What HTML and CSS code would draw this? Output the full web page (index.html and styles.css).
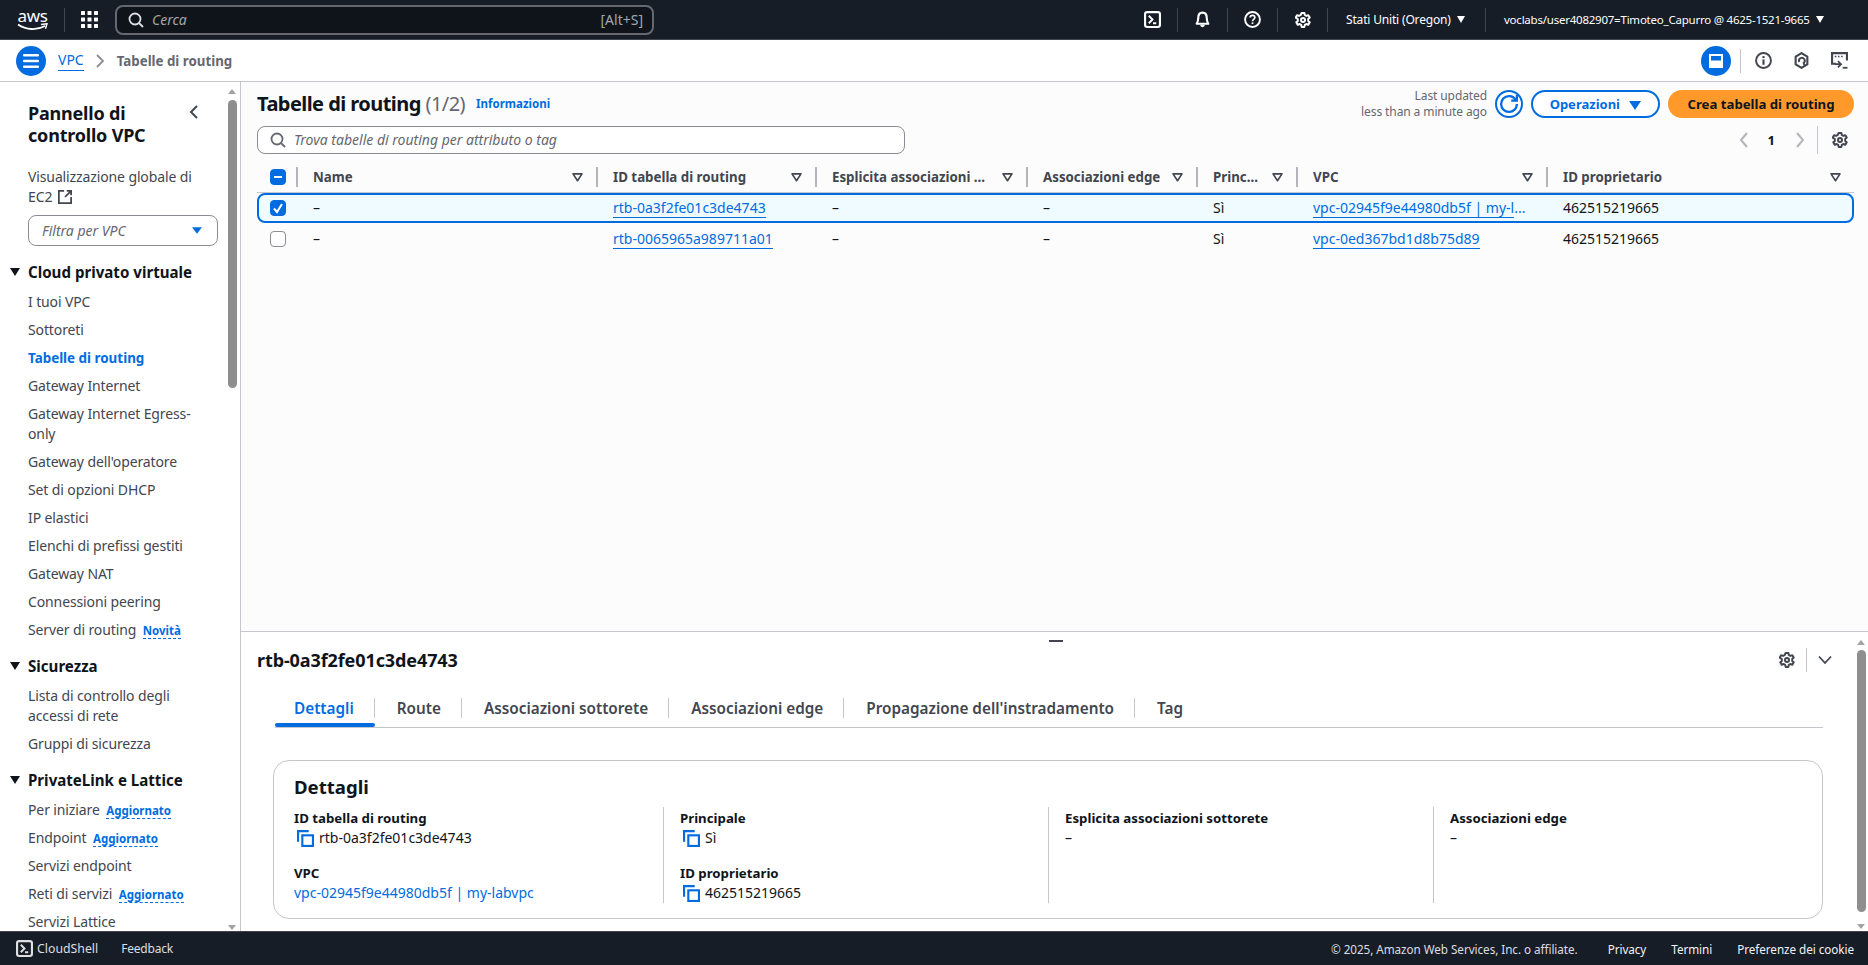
FILE: index.html
```html
<!DOCTYPE html>
<html lang="it">
<head>
    <meta charset="UTF-8">
    <meta name="viewport" content="width=device-width, initial-scale=1.0">
    <title>Tabelle di routing | VPC</title>
    <link rel="stylesheet" href="styles.css">
</head>
<body>
    <svg class="sprite" width="0" height="0">
        <symbol id="gear" viewBox="0 0 16 16"><path d="M6.600 1h2.800l.4 2 1.500.9 2-.7 1.400 2.400-1.500 1.400v1.900l1.500 1.300-1.400 2.500-2-.7-1.500.9-.4 2H6.600l-.4-2-1.500-.9-2 .7-1.400-2.500 1.500-1.300V7L.7 5.600l1.400-2.400 2 .7L5.700 3z" fill="none" stroke="currentColor" stroke-width="2" stroke-linejoin="round"/><circle cx="8" cy="8" r="2" fill="none" stroke="currentColor" stroke-width="2"/></symbol>
        <symbol id="search" viewBox="0 0 16 16"><circle cx="7" cy="7" r="5.500" fill="none" stroke="currentColor" stroke-width="1.800"/><path d="M11 11l4 4" fill="none" stroke="currentColor" stroke-width="1.800"/></symbol>
        <symbol id="shell" viewBox="0 0 16 16"><rect x="1" y="1" width="14" height="14" rx="2" fill="none" stroke="currentColor" stroke-width="2"/><path d="M4.500 4.500L8 8l-3.500 3.500M8.500 11.500h3" fill="none" stroke="currentColor" stroke-width="1.800"/></symbol>
        <symbol id="filter" viewBox="0 0 16 16"><path d="M2.500 3.500h11L8 12z" fill="none" stroke="currentColor" stroke-width="2" stroke-linejoin="round"/></symbol>
        <symbol id="copy" viewBox="0 0 16 16"><path d="M1 11V1h10" fill="none" stroke="currentColor" stroke-width="2"/><rect x="5" y="5" width="10" height="10" fill="none" stroke="currentColor" stroke-width="2"/></symbol>
    </svg>

    <header class="topbar">
        <div class="aws-logo">
            <span>aws</span>
            <svg width="31" height="8" viewBox="0 0 31 8"><path d="M1 1.500c8 5.500 19 6 27 1.500" fill="none" stroke="#fff" stroke-width="1.800"/><path d="M24 1.500l6-.8-1.500 5" fill="none" stroke="#fff" stroke-width="1.400"/></svg>
        </div>
        <div class="grid-btn">
            <svg width="17" height="17" viewBox="0 0 17 17" fill="#fff"><rect width="4" height="4" rx=".5"/><rect x="6.500" width="4" height="4" rx=".5"/><rect x="13" width="4" height="4" rx=".5"/><rect y="6.500" width="4" height="4" rx=".5"/><rect x="6.500" y="6.500" width="4" height="4" rx=".5"/><rect x="13" y="6.500" width="4" height="4" rx=".5"/><rect y="13" width="4" height="4" rx=".5"/><rect x="6.500" y="13" width="4" height="4" rx=".5"/><rect x="13" y="13" width="4" height="4" rx=".5"/></svg>
        </div>
        <div class="top-search">
            <svg class="top-search-icon" width="16" height="16"><use href="#search"/></svg>
            <span class="top-search-text">Cerca</span>
            <span class="top-search-key">[Alt+S]</span>
        </div>
        <div class="top-right">
            <div class="top-cell"><svg width="17" height="17"><use href="#shell"/></svg></div>
            <div class="top-cell">
                <svg width="17" height="17" viewBox="0 0 16 16"><path d="M2.500 12c1-1.500 1.500-3 1.500-5.500 0-3 1.500-5 4-5s4 2 4 5c0 2.500.5 4 1.500 5.500z" fill="none" stroke="currentColor" stroke-width="2" stroke-linejoin="round"/><path d="M5.800 13h4.400a2.200 2.200 0 0 1-4.400 0z" fill="currentColor"/></svg>
            </div>
            <div class="top-cell">
                <svg width="17" height="17" viewBox="0 0 16 16"><circle cx="8" cy="8" r="7" fill="none" stroke="currentColor" stroke-width="1.800"/><path d="M5.800 6.200C5.800 5 6.800 4.200 8 4.200s2.200.8 2.200 2c0 1.700-2.200 1.700-2.200 3.400" fill="none" stroke="currentColor" stroke-width="1.600"/><rect x="7.200" y="10.700" width="1.600" height="1.600" fill="currentColor"/></svg>
            </div>
            <div class="top-cell"><svg width="16" height="16"><use href="#gear"/></svg></div>
            <div class="top-menu top-region"><span>Stati Uniti (Oregon)</span> <i class="caret"></i></div>
            <div class="top-menu top-account"><span>voclabs/user4082907=Timoteo_Capurro @ 4625-1521-9665</span> <i class="caret"></i></div>
        </div>
    </header>

    <div class="crumbbar">
        <div class="round-btn">
            <svg width="16" height="14" viewBox="0 0 16 14" fill="#fff"><rect width="16" height="2.400" rx="1"/><rect y="5.800" width="16" height="2.400" rx="1"/><rect y="11.600" width="16" height="2.400" rx="1"/></svg>
        </div>
        <a class="crumb-link">VPC</a>
        <svg class="crumb-sep" width="10" height="14" viewBox="0 0 10 14"><path d="M2 1l6 6-6 6" fill="none" stroke="#8c8c94" stroke-width="1.800"/></svg>
        <span class="crumb-current">Tabelle di routing</span>
        <div class="crumb-tools">
            <div class="round-btn">
                <svg width="16" height="16" viewBox="0 0 16 16"><rect x="2" y="2" width="12" height="12" fill="none" stroke="#fff" stroke-width="2"/><rect x="2" y="7.500" width="12" height="6.500" fill="#fff"/></svg>
            </div>
            <div class="crumb-tools-sep"></div>
            <svg class="tool-icon" width="17" height="17" viewBox="0 0 16 16"><circle cx="8" cy="8" r="7" fill="none" stroke="currentColor" stroke-width="1.800"/><path d="M8 7v5" stroke="currentColor" stroke-width="2"/><rect x="7" y="3.800" width="2" height="2" fill="currentColor"/></svg>
            <svg class="tool-icon" width="17" height="17" viewBox="0 0 16 16"><path d="M8 1l5.500 3.300v7.400L8 15l-5.500-3.300V4.300z" fill="none" stroke="currentColor" stroke-width="2" stroke-linejoin="round"/><path d="M6 9.500a2.700 2.700 0 1 1 4 .8l1 2.700" fill="none" stroke="currentColor" stroke-width="1.800"/></svg>
            <svg class="tool-icon" width="17" height="17" viewBox="0 0 16 16"><path d="M4.500 11H1V1h14v7" fill="none" stroke="currentColor" stroke-width="2"/><path d="M3.500 3.500h1.500v1.500H3.500zM6.500 3.500H8v1.500H6.500zM9.500 3.500H11v1.500H9.500z" fill="currentColor"/><path d="M3.500 11.500h5M6.500 8.500l3 3-3 3" fill="none" stroke="currentColor" stroke-width="1.600"/><rect x="11" y="14" width="4.500" height="1.700" fill="currentColor"/></svg>
        </div>
    </div>

    <div class="app">
        <nav class="sidebar">
            <div class="side-head">
                <h2>Pannello di controllo VPC</h2>
                <svg class="side-close" width="10" height="14" viewBox="0 0 10 14"><path d="M8 1L2 7l6 6" fill="none" stroke="#424650" stroke-width="2"/></svg>
            </div>
            <a class="side-ext">Visualizzazione globale di EC2 <svg width="14" height="14" viewBox="0 0 16 16"><path d="M15 8v7H1V1h6M10 1h5v5M15 1L8 8" fill="none" stroke="#424650" stroke-width="2"/></svg></a>
            <div class="side-select"><span>Filtra per VPC</span><svg width="10" height="7" viewBox="0 0 12 8"><path d="M0 0h12L6 8z" fill="#006ce0"/></svg></div>

            <h3 class="side-section"><i class="caret dark"></i>Cloud privato virtuale</h3>
            <ul class="side-list">
                <li>I tuoi VPC</li>
                <li>Sottoreti</li>
                <li class="active">Tabelle di routing</li>
                <li>Gateway Internet</li>
                <li>Gateway Internet Egress-only</li>
                <li>Gateway dell'operatore</li>
                <li>Set di opzioni DHCP</li>
                <li>IP elastici</li>
                <li>Elenchi di prefissi gestiti</li>
                <li>Gateway NAT</li>
                <li>Connessioni peering</li>
                <li>Server di routing <span class="badge">Novità</span></li>
            </ul>

            <h3 class="side-section"><i class="caret dark"></i>Sicurezza</h3>
            <ul class="side-list">
                <li>Lista di controllo degli accessi di rete</li>
                <li>Gruppi di sicurezza</li>
            </ul>

            <h3 class="side-section"><i class="caret dark"></i>PrivateLink e Lattice</h3>
            <ul class="side-list">
                <li>Per iniziare <span class="badge">Aggiornato</span></li>
                <li>Endpoint <span class="badge">Aggiornato</span></li>
                <li>Servizi endpoint</li>
                <li>Reti di servizi <span class="badge">Aggiornato</span></li>
                <li>Servizi Lattice</li>
            </ul>
            <div class="scrollbar side-scroll"><i class="arrow up"></i><b></b><i class="arrow down"></i></div>
        </nav>

        <main class="content">
            <section class="table-area">
                <div class="table-title">
                    <h1>Tabelle di routing <span>(1/2)</span></h1>
                    <a class="info-link">Informazioni</a>
                    <div class="table-actions">
                        <div class="updated">Last updated<br>less than a minute ago</div>
                        <button class="btn-refresh"><svg width="18" height="18" viewBox="0 0 16 16"><path d="M10 5h5V0M15 8a6.930 6.930 0 0 1-7 7 6.930 6.930 0 0 1-7-7 6.930 6.930 0 0 1 7-7 6.490 6.490 0 0 1 6 3.700" fill="none" stroke="#006ce0" stroke-width="2"/></svg></button>
                        <button class="btn-outline">Operazioni <i class="caret blue"></i></button>
                        <button class="btn-primary">Crea tabella di routing</button>
                    </div>
                </div>
                <div class="filter-row">
                    <div class="table-search">
                        <svg width="16" height="16"><use href="#search"/></svg>
                        <span>Trova tabelle di routing per attributo o tag</span>
                    </div>
                    <div class="pager">
                        <svg width="10" height="16" viewBox="0 0 10 16"><path d="M8 1L2 8l6 7" fill="none" stroke="#b4b4bb" stroke-width="2"/></svg>
                        <b>1</b>
                        <svg width="10" height="16" viewBox="0 0 10 16"><path d="M2 1l6 7-6 7" fill="none" stroke="#b4b4bb" stroke-width="2"/></svg>
                        <div class="pager-sep"></div>
                        <svg class="pager-gear" width="16" height="16"><use href="#gear"/></svg>
                    </div>
                </div>

                <div class="grid-row grid-head">
                    <div class="cell-check"><span class="check on"><i class="dash"></i></span></div>
                    <div class="col-head"><span>Name</span><svg width="13" height="13"><use href="#filter"/></svg></div>
                    <div class="col-head"><span>ID tabella di routing</span><svg width="13" height="13"><use href="#filter"/></svg></div>
                    <div class="col-head"><span>Esplicita associazioni ...</span><svg width="13" height="13"><use href="#filter"/></svg></div>
                    <div class="col-head"><span>Associazioni edge</span><svg width="13" height="13"><use href="#filter"/></svg></div>
                    <div class="col-head"><span>Princ...</span><svg width="13" height="13"><use href="#filter"/></svg></div>
                    <div class="col-head"><span>VPC</span><svg width="13" height="13"><use href="#filter"/></svg></div>
                    <div class="col-head last"><span>ID proprietario</span><svg width="13" height="13"><use href="#filter"/></svg></div>
                </div>
                <div class="grid-row row selected">
                    <div class="cell-check"><span class="check on"><svg width="12" height="12" viewBox="0 0 12 12"><path d="M2 6.500L5 10l5-8" fill="none" stroke="#fff" stroke-width="2"/></svg></span></div>
                    <div class="cell">–</div>
                    <div class="cell"><a class="link">rtb-0a3f2fe01c3de4743</a></div>
                    <div class="cell">–</div>
                    <div class="cell">–</div>
                    <div class="cell">Sì</div>
                    <div class="cell plain-link"><a class="link">vpc-02945f9e44980db5f | my-l</a>...</div>
                    <div class="cell">462515219665</div>
                </div>
                <div class="grid-row row">
                    <div class="cell-check"><span class="check"></span></div>
                    <div class="cell">–</div>
                    <div class="cell"><a class="link">rtb-0065965a989711a01</a></div>
                    <div class="cell">–</div>
                    <div class="cell">–</div>
                    <div class="cell">Sì</div>
                    <div class="cell"><a class="link">vpc-0ed367bd1d8b75d89</a></div>
                    <div class="cell">462515219665</div>
                </div>
            </section>

            <section class="split">
                <i class="split-handle"></i>
                <div class="split-head">
                    <h2>rtb-0a3f2fe01c3de4743</h2>
                    <div class="split-tools">
                        <svg class="tool-icon" width="16" height="16"><use href="#gear"/></svg>
                        <div class="split-sep"></div>
                        <svg width="14" height="10" viewBox="0 0 14 10"><path d="M1 1.500l6 6.500 6-6.500" fill="none" stroke="#424650" stroke-width="1.800"/></svg>
                    </div>
                </div>
                <div class="tabs">
                    <div class="tab active"><span>Dettagli</span></div>
                    <div class="tab"><span>Route</span></div>
                    <div class="tab"><span>Associazioni sottorete</span></div>
                    <div class="tab"><span>Associazioni edge</span></div>
                    <div class="tab"><span>Propagazione dell'instradamento</span></div>
                    <div class="tab"><span>Tag</span></div>
                </div>
                <div class="card">
                    <h3>Dettagli</h3>
                    <div class="card-grid">
                        <div class="card-col">
                            <dl>
                                <dt>ID tabella di routing</dt>
                                <dd><svg class="copy" width="17" height="17"><use href="#copy"/></svg>rtb-0a3f2fe01c3de4743</dd>
                            </dl>
                            <dl>
                                <dt>VPC</dt>
                                <dd><a class="plain-link">vpc-02945f9e44980db5f | my-labvpc</a></dd>
                            </dl>
                        </div>
                        <div class="card-col">
                            <dl>
                                <dt>Principale</dt>
                                <dd><svg class="copy" width="17" height="17"><use href="#copy"/></svg>Sì</dd>
                            </dl>
                            <dl>
                                <dt>ID proprietario</dt>
                                <dd><svg class="copy" width="17" height="17"><use href="#copy"/></svg>462515219665</dd>
                            </dl>
                        </div>
                        <div class="card-col">
                            <dl>
                                <dt>Esplicita associazioni sottorete</dt>
                                <dd>–</dd>
                            </dl>
                        </div>
                        <div class="card-col">
                            <dl>
                                <dt>Associazioni edge</dt>
                                <dd>–</dd>
                            </dl>
                        </div>
                    </div>
                </div>
                <div class="scrollbar split-scroll"><i class="arrow up"></i><b></b><i class="arrow down"></i></div>
            </section>
        </main>
    </div>

    <footer class="footer">
        <svg width="17" height="17"><use href="#shell"/></svg>
        <span class="foot-shell">CloudShell</span>
        <span class="foot-feedback">Feedback</span>
        <div class="foot-right">
            <span class="foot-copy">© 2025, Amazon Web Services, Inc. o affiliate.</span>
            <span class="foot-strong">Privacy</span>
            <span class="foot-strong">Termini</span>
            <span class="foot-strong">Preferenze dei cookie</span>
        </div>
    </footer>
</body>
</html>
```

FILE: styles.css
```css
* {
    box-sizing: border-box;
}
html, body {
    margin: 0;
    height: 100%;
}
body {
    display: flex;
    flex-direction: column;
    height: 965px;
    overflow: hidden;
    font-family: "Noto Sans", sans-serif;
    font-size: 14px;
    line-height: 20px;
    color: #0f141a;
    background: #fff;
}
h1, h2, h3, ul, dl, dd {
    margin: 0;
    padding: 0;
}
ul {
    list-style: none;
}
.sprite {
    position: absolute;
}
.caret {
    display: inline-block;
    width: 0;
    height: 0;
    border-left: 4.500px solid transparent;
    border-right: 4.500px solid transparent;
    border-top: 7px solid currentColor;
}

/* top bar */
.topbar {
    display: flex;
    align-items: center;
    flex: none;
    height: 40px;
    padding-left: 17px;
    color: #fff;
    background: #161d26;
    border-bottom: 1px solid #424650;
}
.aws-logo {
    display: flex;
    flex-direction: column;
    align-items: center;
    width: 48px;
    padding-right: 16px;
    height: 24px;
    border-right: 1px solid #424650;
    font-size: 17px;
    line-height: 15px;
    letter-spacing: -.3px;
}
.aws-logo svg {
    display: block;
    flex: none;
}
.grid-btn {
    display: flex;
    margin-left: 16px;
}
.top-search {
    display: flex;
    align-items: center;
    width: 539px;
    height: 30px;
    margin-left: 17px;
    padding: 0 9px 0 11px;
    background: #0f141a;
    border: 2px solid #656871;
    border-radius: 8px;
    font-size: 14px;
    color: #a4a4ad;
}
.top-search-icon {
    color: #dedee3;
}
.top-search-text {
    margin-left: 8px;
    font-style: italic;
}
.top-search-key {
    margin-left: auto;
}
.top-right {
    display: flex;
    align-items: center;
    margin-left: auto;
    font-size: 12px;
}
.top-cell {
    display: flex;
    align-items: center;
    justify-content: center;
    width: 50px;
    height: 24px;
    border-right: 1px solid #424650;
}
.top-menu {
    display: flex;
    align-items: center;
    height: 24px;
    padding-left: 18px;
    white-space: nowrap;
}
.top-menu .caret {
    margin-left: 6px;
}
.top-region {
    width: 158px;
    border-right: 1px solid #424650;
    letter-spacing: -.17px;
}
.top-account {
    width: 382px;
    font-size: 11.500px;
    letter-spacing: -.23px;
}

/* breadcrumbs */
.crumbbar {
    display: flex;
    align-items: center;
    flex: none;
    height: 42px;
    padding: 0 20px 0 16px;
    border-bottom: 1px solid #c6c6cd;
}
.round-btn {
    display: flex;
    align-items: center;
    justify-content: center;
    width: 30px;
    height: 30px;
    border-radius: 50%;
    background: #006ce0;
}
.crumb-link {
    margin-left: 12px;
    color: #006ce0;
    border-bottom: 1px solid #006ce0;
    font-size: 14px;
}
.crumb-sep {
    margin-left: 11px;
}
.crumb-current {
    margin-left: 12px;
    color: #656871;
    font-weight: 700;
    font-size: 13.300px;
}
.crumb-tools {
    display: flex;
    align-items: center;
    margin-left: auto;
}
.crumb-tools-sep {
    width: 1px;
    height: 24px;
    margin: 0 14px 0 9px;
    background: #c6c6cd;
}
.tool-icon {
    color: #424650;
}
.crumb-tools .tool-icon + .tool-icon {
    margin-left: 21px;
}

/* sidebar */
.app {
    display: flex;
    flex: 1;
    min-height: 0;
}
.sidebar {
    position: relative;
    flex: none;
    width: 241px;
    padding: 20px 0 0 28px;
    overflow: hidden;
    border-right: 1px solid #c6c6cd;
    color: #424650;
    letter-spacing: -.12px;
}
.side-head {
    display: flex;
    justify-content: space-between;
    width: 171px;
}
.side-head h2 {
    width: 140px;
    font-size: 18px;
    line-height: 22px;
    font-weight: 700;
    color: #0f141a;
    letter-spacing: -.2px;
}
.side-close {
    margin-top: 3px;
}
.side-ext {
    display: block;
    width: 175px;
    margin-top: 21px;
}
.side-ext svg {
    vertical-align: -2px;
    margin-left: 2px;
}
.side-select {
    display: flex;
    align-items: center;
    justify-content: space-between;
    width: 190px;
    height: 31px;
    margin-top: 8px;
    padding: 0 15px 0 13px;
    border: 1px solid #8c8c94;
    border-radius: 8px;
    font-style: italic;
    color: #656871;
    letter-spacing: 0;
}
.side-section {
    position: relative;
    margin-top: 15px;
    font-size: 15.100px;
    line-height: 22px;
    font-weight: 700;
    color: #0f141a;
    letter-spacing: 0;
}
.side-section .caret {
    position: absolute;
    left: -18px;
    top: 7px;
    border-left-width: 5px;
    border-right-width: 5px;
    border-top-width: 8px;
}
.side-list {
    margin-top: 9px;
    width: 180px;
}
.side-list li {
    margin-bottom: 8px;
}
.side-list li:last-child {
    margin-bottom: 0;
}
.side-list .active {
    color: #006ce0;
    font-weight: 700;
    font-size: 13.400px;
    letter-spacing: 0;
}
.badge {
    display: inline-block;
    margin-left: 3px;
    font-size: 11.500px;
    line-height: 14px;
    font-weight: 700;
    letter-spacing: 0;
    color: #006ce0;
    border-bottom: 1px dashed #006ce0;
}
.scrollbar {
    position: absolute;
    width: 11px;
}
.scrollbar b {
    position: absolute;
    left: 1px;
    width: 9px;
    border-radius: 5px;
    background: #8e8e8e;
}
.arrow {
    position: absolute;
    left: 1px;
    width: 0;
    height: 0;
    border-left: 4.500px solid transparent;
    border-right: 4.500px solid transparent;
}
.arrow.up {
    top: 0;
    border-bottom: 5px solid #a3a3a3;
}
.arrow.down {
    bottom: 0;
    border-top: 5px solid #a3a3a3;
}
.side-scroll {
    top: 7px;
    right: 2px;
    height: 841px;
}
.side-scroll b {
    top: 11px;
    height: 288px;
}

/* table */
.content {
    display: flex;
    flex-direction: column;
    flex: 1;
    min-width: 0;
}
.table-area {
    flex: 1;
    padding: 8px 14px 0 16px;
    background: #fcfcfc;
    border-bottom: 1px solid #c6c6cd;
}
.table-title {
    display: flex;
    align-items: center;
    height: 28px;
}
.table-title h1 {
    font-size: 20px;
    line-height: 28px;
    font-weight: 700;
    color: #0f141a;
    letter-spacing: -.55px;
}
.table-title h1 span {
    font-weight: 400;
    color: #656871;
}
.info-link {
    margin-left: 11px;
    font-size: 11.500px;
    font-weight: 700;
    color: #006ce0;
}
.table-actions {
    display: flex;
    align-items: center;
    margin-left: auto;
}
.updated {
    font-size: 12px;
    line-height: 16px;
    text-align: right;
    color: #656871;
    letter-spacing: -.1px;
}
.btn-refresh {
    display: flex;
    align-items: center;
    justify-content: center;
    width: 28px;
    height: 28px;
    margin-left: 8px;
    padding: 0;
    background: #fff;
    border: 2px solid #006ce0;
    border-radius: 50%;
}
.btn-outline, .btn-primary {
    height: 28px;
    border-radius: 14px;
    font-family: inherit;
    font-size: 13px;
    font-weight: 700;
}
.btn-outline {
    width: 129px;
    margin-left: 8px;
    padding: 0;
    background: #fff;
    color: #006ce0;
    border: 2px solid #006ce0;
}
.btn-outline .caret {
    margin-left: 6px;
    border-left-width: 6px;
    border-right-width: 6px;
    border-top-width: 9px;
    vertical-align: -1px;
}
.btn-primary {
    width: 186px;
    margin-left: 8px;
    padding: 0;
    font-size: 13.200px;
    color: #0f141a;
    border: 0;
    background: #ff9a2a;
}
.filter-row {
    display: flex;
    align-items: center;
    height: 28px;
    margin-top: 8px;
}
.table-search {
    display: flex;
    align-items: center;
    gap: 8px;
    width: 648px;
    height: 28px;
    padding: 0 12px;
    background: #fff;
    border: 1px solid #8c8c94;
    border-radius: 8px;
    color: #656871;
}
.table-search span {
    font-style: italic;
    font-size: 14px;
}
.pager {
    display: flex;
    align-items: center;
    margin-left: auto;
}
.pager b {
    margin: 0 20px 0 19px;
    font-size: 13px;
}
.pager-sep {
    width: 1px;
    height: 28px;
    margin: 0 14px 0 12px;
    background: #c6c6cd;
}
.pager-gear {
    color: #424650;
    margin-right: 6px;
}
.grid-row {
    display: grid;
    grid-template-columns: 39px 300px 219px 211px 170px 100px 250px 1fr;
}
.grid-head {
    align-items: center;
    height: 31px;
    margin-top: 8px;
    border-bottom: 1px solid #c6c6cd;
    font-size: 13.300px;
    font-weight: 700;
    color: #424650;
}
.cell-check {
    display: flex;
    align-items: center;
    padding-left: 13px;
}
.col-head {
    display: flex;
    align-items: center;
    justify-content: space-between;
    height: 20px;
    padding: 0 12px 0 15px;
    border-left: 2px solid #b4b4bb;
}
.col-head span {
    white-space: nowrap;
}
.col-head svg {
    flex: none;
    color: #424650;
}
.check {
    display: flex;
    align-items: center;
    justify-content: center;
    width: 16px;
    height: 16px;
    background: #fff;
    border: 1px solid #8c8c94;
    border-radius: 4px;
}
.check.on {
    background: #006ce0;
    border-color: #006ce0;
}
.dash {
    width: 8px;
    height: 2px;
    background: #fff;
}
.row {
    align-items: center;
    height: 30px;
    border: 2px solid transparent;
    margin-top: 1px;
}
.row .cell-check {
    padding-left: 11px;
}
.selected {
    background: #f0fbff;
    border-color: #006ce0;
    border-radius: 8px;
    margin-top: 0;
}
.row .cell {
    padding-left: 15px;
    white-space: nowrap;
}
.link {
    color: #006ce0;
    border-bottom: 1px solid #006ce0;
}

/* split panel */
.split {
    position: relative;
    flex: none;
    height: 299px;
    padding: 16px 45px 0 16px;
}
.split-handle {
    position: absolute;
    top: 8px;
    left: 808px;
    width: 14px;
    height: 2px;
    background: #424650;
}
.split-head {
    display: flex;
    align-items: center;
    justify-content: space-between;
    height: 24px;
}
.split-head h2 {
    font-size: 18px;
    line-height: 24px;
    font-weight: 700;
    color: #0f141a;
    letter-spacing: -.1px;
}
.split-tools {
    display: flex;
    align-items: center;
    margin-right: -9px;
}
.split-sep {
    width: 1px;
    height: 24px;
    margin: 0 11px;
    background: #c6c6cd;
}
.tabs {
    display: flex;
    height: 38px;
    margin: 18px 0 0 18px;
    border-bottom: 1px solid #c6c6cd;
}
.tab {
    position: relative;
    height: 37px;
    padding-top: 8px;
    font-size: 15.300px;
    font-weight: 600;
    color: #424650;
}
.tab span {
    display: block;
    height: 20px;
    padding: 0 20px 0 22px;
    line-height: 20px;
    white-space: nowrap;
    border-right: 1px solid #c6c6cd;
}
.tab:first-child span {
    padding: 0 20px 0 19px;
}
.tab:last-child span {
    border-right: 0;
}
.tab.active {
    color: #006ce0;
}
.tab.active::after {
    content: "";
    position: absolute;
    left: 0;
    right: 0;
    bottom: 0;
    height: 4px;
    border-radius: 2px;
    background: #006ce0;
}
.card {
    height: 159px;
    margin: 32px 0 0 16px;
    padding: 14px 20px 0;
    border: 1px solid #c6c6cd;
    border-radius: 16px;
}
.card h3 {
    font-size: 18.600px;
    line-height: 24px;
    font-weight: 700;
    color: #0f141a;
}
.card-grid {
    display: grid;
    grid-template-columns: 369px 385px 385px 1fr;
    grid-template-rows: 96px;
    margin-top: 8px;
}
.card-col + .card-col {
    padding-left: 16px;
    border-left: 1px solid #c6c6cd;
}
.card-col dl {
    padding-top: 1px;
}
.card-col dl + dl {
    margin-top: 14px;
}
.card-col dt {
    font-size: 13.250px;
    font-weight: 700;
    color: #0f141a;
}
.card-col dd {
    display: flex;
    align-items: center;
    color: #0f141a;
}
.copy {
    margin: 0 5px 0 3px;
    color: #006ce0;
}
.plain-link {
    color: #006ce0;
}
.split-scroll {
    top: 8px;
    right: 1px;
    height: 289px;
}
.split-scroll b {
    top: 10px;
    height: 262px;
}

/* footer */
.footer {
    display: flex;
    align-items: center;
    flex: none;
    height: 34px;
    padding: 0 14px 0 16px;
    background: #161d26;
    border-top: 1px solid #424650;
    color: #dedee3;
    font-size: 12px;
}
.foot-shell {
    margin-left: 4px;
    font-size: 12.300px;
}
.foot-feedback {
    margin-left: 23px;
    letter-spacing: -.2px;
}
.foot-right {
    display: flex;
    gap: 25px;
    margin-left: auto;
    font-size: 11.700px;
    letter-spacing: -.05px;
}
.foot-right .foot-copy {
    margin-right: 5px;
}
.foot-right .foot-strong {
    color: #f3f3f7;
}
```
